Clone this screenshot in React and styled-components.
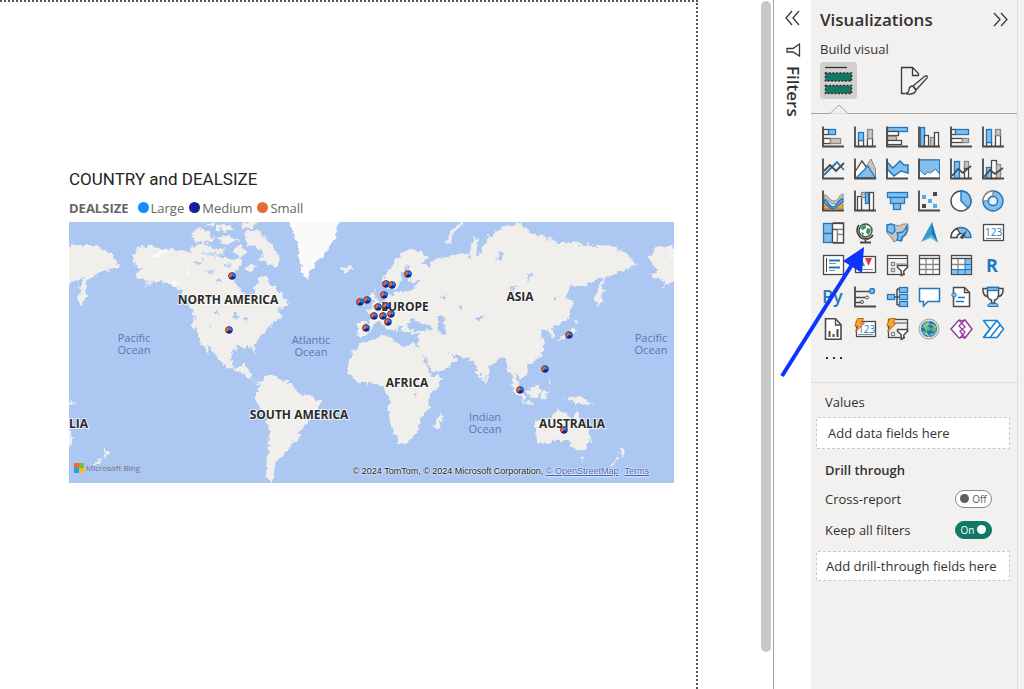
import { useState } from "react";
import styled, { createGlobalStyle } from "styled-components";

const GlobalStyle = createGlobalStyle`
  * {
    box-sizing: border-box;
  }
  body {
    margin: 0;
    background: #fff;
    color: #323130;
    font-family: "Open Sans", "Noto Sans", sans-serif;
    font-size: 13px;
  }
  button {
    padding: 0;
    border: 0;
    background: none;
    color: inherit;
    font: inherit;
    cursor: pointer;
  }
`;

const Layout = styled.div`
  display: flex;
  min-height: 100vh;
  overflow: hidden;
`;

const Canvas = styled.main`
  display: flex;
  flex: 1;
  min-width: 0;
  border-right: 1px solid #a3a1a0;
`;

const ReportPage = styled.section`
  flex: 1;
  min-width: 0;
  padding: 167px 22px 0 69px;
  border-top: 2px dotted #555;
  border-right: 2px dotted #555;
`;

const ScrollArea = styled.div`
  width: 75px;
  height: 652px;
  padding: 1px 2px 0 63px;
`;

const ScrollThumb = styled.div`
  height: 100%;
  border-radius: 5px;
  background: #c8c8c8;
`;

const VisualTitle = styled.h2`
  margin: 0;
  color: #252423;
  font-family: Roboto, sans-serif;
  font-size: 17px;
  font-weight: 400;
  line-height: 20px;
`;

const Legend = styled.div`
  display: flex;
  align-items: center;
  gap: 5px;
  height: 33px;
  color: #666;
  font-size: 13px;
  padding-top: 4px;
`;

const LegendTitle = styled.strong`
  font-weight: 700;
  margin-right: 4px;
`;

const LegendItem = styled.span`
  display: flex;
  align-items: center;
  gap: 2px;

  &::before {
    content: "";
    width: 11px;
    height: 11px;
    border-radius: 50%;
    background: ${(props) => props.$color};
  }
`;

const MapFrame = styled.div`
  position: relative;
  background: #abc7f2;

  > svg {
    display: block;
    width: 100%;
  }
`;

const MapLabel = styled.text`
  fill: #2b2b2b;
  stroke: #fff;
  stroke-opacity: 0.7;
  stroke-width: 2px;
  paint-order: stroke;
  font-size: 12px;
  font-weight: 700;
  text-anchor: middle;
`;

const OceanLabel = styled.text`
  fill: #5878b4;
  font-size: 11px;
  text-anchor: middle;
`;

const BingLogo = styled.div`
  position: absolute;
  left: 5px;
  bottom: 10px;
  display: flex;
  align-items: center;
  gap: 2px;
  color: #737373;
  font-size: 8px;
  line-height: 10px;
`;

const Credits = styled.div`
  position: absolute;
  right: 25px;
  bottom: 6px;
  color: #222;
  font-family: "Liberation Sans", Arial, sans-serif;
  font-size: 9px;
  line-height: 12px;
  text-shadow: 0 0 2px #fff, 0 0 2px #fff;
  white-space: nowrap;

  a {
    color: #4a63b5;
  }
  a + a {
    margin-left: 6px;
  }
`;

const FiltersPane = styled.aside`
  display: flex;
  flex-direction: column;
  align-items: center;
  width: 37px;
  padding-top: 10px;
  background: #fff;

  svg {
    display: block;
  }
`;

const FiltersLabel = styled.button`
  display: flex;
  align-items: center;
  gap: 8px;
  margin-top: 16px;
  font-size: 17px;
  font-weight: 600;
  line-height: 20px;
  writing-mode: vertical-rl;
`;

const VisPane = styled.aside`
  position: relative;
  width: 207px;
  background: #f2f1f0;
  border-right: 1px solid #dedcda;
`;

const PaneEdge = styled.div`
  width: 6px;
  background: #f2f1f0;
`;

const PaneHeader = styled.header`
  display: flex;
  align-items: center;
  justify-content: space-between;
  height: 38px;
  padding: 0 9px;

  h1 {
    margin: 0;
    font-size: 17px;
    font-weight: 600;
  }
  svg {
    display: block;
  }
`;

const BuildLabel = styled.div`
  padding-left: 9px;
  font-size: 13px;
  line-height: 22px;
`;

const Tabs = styled.div`
  position: relative;
  display: flex;
  gap: 38px;
  padding: 2px 9px 14px;
  border-bottom: 1px solid #a6a4a2;
`;

const Tab = styled.button`
  width: 37px;
  height: 37px;
  border-radius: 3px;
  background: ${(props) => (props.$active ? "#d2d0ce" : "transparent")};

  svg {
    display: block;
  }
`;

const Notch = styled.svg`
  position: absolute;
  left: 18px;
  bottom: -2px;
`;

const VisualGrid = styled.div`
  display: grid;
  grid-template-columns: repeat(6, 32px);
  grid-auto-rows: 32px;
  padding: 7px 6px 0;
`;

const VisualButton = styled.button`
  display: grid;
  place-items: center;

  svg {
    overflow: visible;
  }
  text {
    font-family: "Open Sans", sans-serif;
  }
`;

const MoreButton = styled.button`
  display: flex;
  align-items: center;
  height: 26px;
  margin: 0 0 11px 14px;
`;

const Fields = styled.div`
  padding: 8px 7px 0 5px;
  border-top: 1px solid #dedcda;
`;

const FieldHeading = styled.div`
  padding-left: 9px;
  margin-top: ${(props) => (props.$spaced ? "10px" : "0")};
  font-weight: ${(props) => (props.$strong ? 600 : 400)};
  line-height: 22px;
`;

const DropWell = styled.div`
  height: ${(props) => (props.$small ? "30px" : "32px")};
  margin-top: ${(props) => (props.$small ? "6px" : "4px")};
  padding-left: ${(props) => (props.$small ? "9px" : "11px")};
  border: 1px dashed #c8c6c4;
  border-radius: 2px;
  background: #fff;
  line-height: ${(props) => (props.$small ? "28px" : "30px")};
  white-space: nowrap;
`;

const SwitchRow = styled.label`
  display: flex;
  align-items: center;
  justify-content: space-between;
  height: 31px;
  padding: 0 18px 0 9px;
  cursor: pointer;

  &:first-of-type {
    margin-top: 2px;
  }
`;

const SwitchInput = styled.input`
  position: absolute;
  opacity: 0;
`;

const SwitchTrack = styled.span`
  display: flex;
  flex-direction: ${(props) => (props.$on ? "row" : "row-reverse")};
  align-items: center;
  justify-content: center;
  gap: 3px;
  width: 37px;
  height: 18px;
  border: 1px solid ${(props) => (props.$on ? "#117865" : "#8a8886")};
  border-radius: 9px;
  background: ${(props) => (props.$on ? "#117865" : "#fff")};
  color: ${(props) => (props.$on ? "#fff" : "#605e5c")};
  font-size: 10px;

  &::after {
    content: "";
    width: 9px;
    height: 9px;
    border-radius: 50%;
    background: ${(props) => (props.$on ? "#fff" : "#605e5c")};
  }
`;

const Pointer = styled.svg`
  position: absolute;
  left: -31px;
  top: 246px;
  pointer-events: none;
`;

// chart icon palette
const dark = "#4b4947";
const blue = "#83beec";
const edge = "#1f78bf";
const gray = "#c8c6c4";
const mid = "#8a8886";
const orange = "#f2a33a";

const Box = ({ x, y, w, h, f = "#fff", s = dark }) => (
  <rect x={x} y={y} width={w} height={h} fill={f} stroke={s} strokeWidth="1.300" />
);
const Axis = () => <path d="M1 .5V20.500H22" stroke={dark} fill="none" strokeWidth="1.800" />;
const Bolt = () => (
  <path d="M3.500.5h6L7 5h3.500L1.500 14 4 8H.8z" fill={orange} stroke="#c96a14" strokeWidth="1" />
);
const Funnel = () => (
  <path d="M11.500 11.500h10v1.800l-3.700 3.700v3l-2.500 1.500V17l-3.800-3.700z" fill="#fff" stroke={dark} strokeWidth="1.500" />
);

const visuals = [
  ["Stacked bar chart", <><Box x={1.5} y={3.5} w={5} h={5} /><Box x={6.5} y={3.5} w={7} h={5} f={blue} s={edge} /><Box x={1.5} y={12.5} w={7} h={5} /><Box x={8.5} y={12.5} w={10} h={5} f={gray} s={mid} /><Axis /></>],
  ["Stacked column chart", <><Box x={4.5} y={14.5} w={5} h={6} /><Box x={4.5} y={6.5} w={5} h={8} f={blue} s={edge} /><Box x={13.5} y={12.5} w={5} h={8} /><Box x={13.5} y={3.5} w={5} h={9} f={gray} s={mid} /><Axis /></>],
  ["Clustered bar chart", <><Box x={1.5} y={1.5} w={20} h={4} f={blue} s={edge} /><Box x={1.5} y={5.5} w={11} h={4} /><Box x={1.5} y={10.5} w={9} h={4} f={gray} s={mid} /><Box x={1.5} y={14.5} w={14} h={4} /><Axis /></>],
  ["Clustered column chart", <><Box x={2.5} y={1.5} w={4} h={19} f={blue} s={edge} /><Box x={6.5} y={9.5} w={4} h={11} /><Box x={12.5} y={11.5} w={4} h={9} f={gray} s={mid} /><Box x={16.5} y={6.5} w={4} h={14} /><Axis /></>],
  ["100% stacked bar chart", <><Box x={1.5} y={3.5} w={4} h={5} /><Box x={5.5} y={3.5} w={13} h={5} f={blue} s={edge} /><Box x={1.5} y={12.5} w={11} h={4} /><Box x={12.5} y={12.5} w={6} h={4} f={gray} s={mid} /><Axis /></>],
  ["100% stacked column chart", <><Box x={4.5} y={16.5} w={5} h={4} /><Box x={4.5} y={3.5} w={5} h={13} f={blue} s={edge} /><Box x={13.5} y={9.5} w={5} h={11} /><Box x={13.5} y={3.5} w={5} h={6} f={gray} s={mid} /><Axis /></>],
  ["Line chart", <><path d="M2 17l6-6 7-7 7 8" fill="none" stroke={edge} strokeWidth="1.800" /><path d="M2 13l6-6 6 6 8-8" fill="none" stroke={dark} strokeWidth="1.800" /><Axis /></>],
  ["Area chart", <><path d="M10 12L17 1l4.500 10v9z" fill={gray} stroke={mid} /><path d="M1 14L8 3l5 7-9 10H1z" fill="#fff" stroke={dark} strokeWidth="1.300" /><path d="M2 20L14 8l7.500 12z" fill={blue} stroke={edge} strokeWidth="1.300" /><Axis /></>],
  ["Stacked area chart", <><path d="M1 4l7 5 7-6 3 3 4 1v14H1z" fill="#fff" /><path d="M1 4l6 6 7-7 4 4h4v8l-7-2-7 5-7-7z" fill={blue} stroke={edge} strokeWidth="1.500" /><Axis /></>],
  ["100% stacked area chart", <><path d="M1 1.500h20.500V20H1z" fill="#fff" stroke={mid} /><path d="M1.500 2h20v14l-4-5-5 4-3-1-2.500 3L1.500 12z" fill={blue} stroke={edge} /><Axis /></>],
  ["Line and stacked column chart", <><Box x={4.5} y={3.5} w={5} h={17} f={blue} s={edge} /><Box x={14.5} y={3.5} w={4} h={7} f={gray} s={mid} /><Box x={14.5} y={10.5} w={4} h={10} /><path d="M2 18l6-7 5 4 8-7" fill="none" stroke={dark} strokeWidth="1.700" /><Axis /></>],
  ["Line and clustered column chart", <><Box x={4.5} y={9.5} w={5} h={11} f={blue} s={edge} /><Box x={9.5} y={2.5} w={5} h={18} /><Box x={14.5} y={6.5} w={4} h={14} f={gray} s={mid} /><path d="M2 19l6-7 5 4 8-6" fill="none" stroke={dark} strokeWidth="1.700" /><Axis /></>],
  ["Ribbon chart", <><path d="M2 5c5 0 5 6 10 6s5-7 9-7v4c-4 0-5 6-9 6S7 9 2 9z" fill={gray} stroke={mid} /><path d="M2 15h6v4H2zM14 14h7v5h-7z" fill={orange} stroke="#d07420" /><path d="M2 10c4 0 5 7 9 7s5-8 10-8v3c-4 0-5 7-10 7s-5-6-9-6z" fill={blue} stroke={edge} strokeWidth="1.300" /><Axis /></>],
  ["Waterfall chart", <><Box x={3.5} y={6.5} w={4} h={14} /><Box x={7.5} y={2.5} w={5} h={5} f={gray} s={mid} /><Box x={11.5} y={2.5} w={3} h={11} f={blue} s={edge} /><Box x={15.5} y={2.5} w={4} h={18} /><Axis /></>],
  ["Funnel", <><Box x={1.5} y={2.5} w={20} h={5} f={blue} s={edge} /><Box x={4.5} y={7.5} w={14} h={6} f={blue} s={edge} /><Box x={7.5} y={13.5} w={7} h={6} f={blue} s={edge} /></>],
  ["Scatter chart", <><path d="M4 5h4v4H4zM10 9h4v4h-4zM15 14h4v4h-4z" fill="#5ea7df" /><path d="M15 2h4v4h-4zM4 14h4v4H4z" fill={dark} /><Axis /></>],
  ["Pie chart", <><circle cx="11" cy="11" r="10" fill="#fff" stroke={dark} strokeWidth="1.400" /><path d="M11 1a10 10 0 0 1 7 17l-7-7z" fill={blue} stroke={edge} strokeWidth="1.400" /></>],
  ["Donut chart", <><circle cx="11" cy="11" r="10" fill={blue} stroke={edge} strokeWidth="1.400" /><path d="M11 1A10 10 0 0 0 1 11h5a5 5 0 0 1 5-5z" fill="#fff" stroke={mid} strokeWidth="1.400" /><circle cx="11" cy="11" r="4.500" fill="#f2f1f0" stroke={edge} strokeWidth="1.400" /></>],
  ["Treemap", <><Box x={1.5} y={1.5} w={9} h={10} f={blue} s={edge} /><Box x={1.5} y={11.5} w={9} h={9} f={blue} s={edge} /><Box x={10.5} y={1.5} w={11} h={6} /><Box x={10.5} y={7.5} w={5} h={13} /><Box x={15.5} y={7.5} w={6} h={5} s={mid} /><Box x={15.5} y={12.5} w={6} h={8} s={mid} /><path d="M11 1h10.500v20H11" fill="none" stroke={dark} strokeWidth="1.300" /></>],
  ["Map", <><circle cx="11.500" cy="8.500" r="6.500" fill="#fff" stroke={dark} strokeWidth="1.400" /><path d="M8 4l4-1v3L9 8 6.500 7zM13 6l4 1-1 4-2 2-2-3zM7 10l3 1-1 3z" fill="#2f9e55" /><path d="M5 3C1 8 4 17 12 17c3 0 5-1 7-4M11.500 17v3.500M6 20.500h11" fill="none" stroke={dark} strokeWidth="1.800" /></>],
  ["Filled map", <><path d="M1 3l4-1 4 1 4 1 4-2h5v6l-2 5-3 2-1 4-5-1-3 2-3-5-4-4z" fill={gray} stroke={mid} /><path d="M1 3l4-1 3 1 1 6-3 3-5-3z" fill={blue} stroke={edge} strokeWidth="1.300" /><path d="M11 11l6-1 4-6v5l-2 4-3 2-1 4-4-1 1-4z" fill={blue} stroke={edge} strokeWidth="1.300" /></>],
  ["Azure map", <><path d="M14 0L3 20l11-7z" fill="#3299cc" /><path d="M14 0v13l6 8z" fill="#1677bd" /><path d="M3 20l11-7 6 8-7-5z" fill="#52b9e5" /></>],
  ["Gauge", <><path d="M1 15.500a10 10 0 0 1 20 0h-6a4 4 0 0 0-8 0z" fill={blue} stroke={edge} strokeWidth="1.300" /><path d="M1 15.500a10 10 0 0 1 6-9l3 5a4 4 0 0 0-3 4z" fill="#fff" stroke={dark} strokeWidth="1.400" /><path d="M10 15.500l6-6-3 7z" fill={dark} stroke={dark} /></>],
  ["Card", <><Box x={1.5} y={2.5} w={20} h={16} /><text x="3" y="14" fontSize="10" fill={edge}>123</text><path d="M4 16.500h15" stroke={mid} /></>],
  ["Multi-row card", <><Box x={1.5} y={1.5} w={20} h={19} /><path d="M4.500 4v14" stroke={dark} /><path d="M7 6.500h11M7 13.500h11" stroke={edge} strokeWidth="2" /><path d="M7 9.500h7M7 16.500h6" stroke={mid} /></>],
  ["KPI", <><Box x={1.5} y={2.5} w={20} h={16} /><path d="M4 12l4-7 3 7z" fill="#34a360" /><path d="M11 4h7l-3.500 8z" fill="#d93c43" /><path d="M4 15.500h15" stroke={mid} /></>],
  ["Slicer", <><Box x={1.5} y={1.5} w={20} h={19} f="#f2f1f0" /><path d="M1 4.500h20.500" stroke={dark} /><Box x={5.5} y={8.5} w={3} h={3} s={mid} /><Box x={5.5} y={14.5} w={3} h={3} s={mid} /><path d="M10 10h10" stroke={mid} /><path d="M19 14h4v8h-4z" fill="#f2f1f0" /><Funnel /></>],
  ["Table", <><Box x={1.5} y={1.5} w={20} h={19} /><path d="M8 5v15M15 5v15M2 10.500h19M2 15.500h19" stroke={mid} strokeWidth="1.300" /><path d="M1 4.500h21" stroke={dark} strokeWidth="1.300" /><path d="M2 3h19" stroke={gray} /></>],
  ["Matrix", <><Box x={1.5} y={1.5} w={20} h={19} /><path d="M15 5h6v15H2v-5h13z" fill={blue} /><path d="M8 5v10M2 10.500h13" stroke={mid} strokeWidth="1.300" /><path d="M15 5v15M8 15v5M15 10.500h6M2 15.500h19" stroke={edge} /><path d="M1 4.500h21" stroke={dark} strokeWidth="1.300" /><path d="M2 3h19" stroke={gray} /></>],
  ["R script visual", <text x="4" y="18" fontSize="18" fontWeight="700" fill={edge}>R</text>],
  ["Python visual", <text x="0" y="17" fontSize="18" fontWeight="600" fill={edge}>Py</text>],
  ["Key influencers", <><path d="M1 5.500h15M1 11.500h10M1 16.500h6" stroke={dark} strokeWidth="1.300" /><circle cx="18" cy="5" r="2.500" fill={blue} stroke={edge} strokeWidth="1.300" /><circle cx="13" cy="11.500" r="1.500" fill="#fff" stroke={dark} /><circle cx="8" cy="16" r="1.500" fill="#fff" stroke={dark} /><Axis /></>],
  ["Decomposition tree", <><path d="M8 11h6M11 3v16M11 3h4M11 19h4" fill="none" stroke={dark} strokeWidth="1.500" /><Box x={1.5} y={8.5} w={7} h={5} f={blue} s={edge} /><Box x={13.5} y={1.5} w={8} h={5} f={blue} s={edge} /><Box x={13.5} y={8.5} w={8} h={5} f={blue} s={edge} /><Box x={13.5} y={15.5} w={8} h={5} f={blue} s={edge} /></>],
  ["Q&A", <path d="M1.500 2.500h20v13H10L5.500 20v-4.500h-4z" fill="#fff" stroke={edge} strokeWidth="1.500" />],
  ["Smart narrative", <><path d="M3.500 1.500h11l5 5v14h-16z" fill="#fff" stroke={dark} strokeWidth="1.500" /><path d="M14.500 1.500v5h5" fill="none" stroke={dark} strokeWidth="1.300" /><path d="M8 11.500h7M6 15.500h8" stroke={edge} strokeWidth="1.300" /><circle cx="4" cy="9" r="2.200" fill={blue} stroke={edge} /></>],
  ["Goals", <><path d="M5.500 1.500h11v7c0 3-2 5-4 5.500v3h-3v-3c-2-.5-4-2.500-4-5.500z" fill="#fff" stroke={dark} strokeWidth="1.500" /><path d="M5.500 2.500H1v3q1 5 5 5M16.500 2.500H21v3q-1 5-5 5" fill="none" stroke={dark} strokeWidth="1.500" /><Box x={5.5} y={1.5} w={11} h={3} f={blue} s={edge} /><path d="M6 20.500v-2l2-1h6l2 1v2z" fill={blue} stroke={edge} /></>],
  ["Paginated report", <><path d="M3.500.7h10l5.500 6v14.500H3.500z" fill="#fff" stroke={dark} strokeWidth="1.600" /><path d="M13.500 1v6h5" fill="none" stroke={dark} strokeWidth="1.300" /><path d="M7.500 13v6M11.500 16v3M15.500 11v8" stroke={dark} strokeWidth="2" /></>],
  ["Card (new)", <><Box x={2.5} y={3.5} w={19} h={15} /><text x="4" y="15" fontSize="10" fill={edge}>123</text><path d="M4 16.500h15" stroke={mid} /><Bolt /></>],
  ["Slicer (new)", <><Box x={2.5} y={1.5} w={19} h={18} f="#f2f1f0" /><path d="M8 5h13" stroke={dark} /><Box x={5.5} y={14.5} w={3} h={3} s={mid} /><path d="M19 14h4v8h-4z" fill="#f2f1f0" /><Funnel /><Bolt /></>],
  ["ArcGIS maps", <><circle cx="11" cy="11" r="10" fill="#ddd" stroke="#a3a3a3" /><circle cx="11" cy="11" r="8" fill="#1874bc" /><path d="M5 6l4-3 3 2-2 3 3 2-1 3-4-1-3-3zM14 5l4 3v5l-3 1-2-3 2-2zM5 12l4 3 1 3-4-2zM13 15l3 1-3 2z" fill="#66b267" /><path d="M4 10c5-5 10-5 14 0M4 14c5 4 10 4 14 0M11 3c-5 5-3 12 0 16" fill="none" stroke="#bbdaf0" strokeWidth=".7" /></>],
  ["Power Apps", <><path d="M1 11l8-9 3 1 3-1 7 9-7 9-3-1-3 1z" fill="#fff" stroke="#9a3c9e" strokeWidth="1.500" /><path d="M9 2l6 7-5 4 5 7M15 2L9 8l6 6-5 6" fill="none" stroke="#9a3c9e" strokeWidth="1.300" /></>],
  ["Power Automate", <><path d="M1.500 2.500H15l6.500 8.500-6.500 8.500H1.500L8 11z" fill="#fff" stroke="#1683d8" strokeWidth="1.600" strokeLinejoin="round" /><path d="M15 2.500L1.500 19.500M18 7L8 19.500" stroke="#1683d8" strokeWidth="1.500" /></>],
];

// one full turn of the globe is 517 units wide
const WORLD_WIDTH = 517;

const land = [
  // north and central america
  "M133 256 139 247 150 245 158 248 170 249 178 251 188 252 196 249 204 254 215 255 224 257 234 260 240 258 244 266 236 270 233 276 235 284 240 290 247 294 250 301 253 295 255 287 258 278 266 277 270 284 277 288 282 296 290 303 284 308 275 310 284 315 278 320 270 325 265 332 260 338 254 344 256 354 252 352 250 347 240 347 232 351 231 361 236 369 242 365 246 361 245 368 251 372 250 378 256 382 262 381 261 385 251 380 245 374 234 370 220 362 213 350 205 343 211 356 203 347 198 335 193 325 194 313 188 303 183 294 177 287 167 283 156 281 143 288 149 281 138 278 135 274 142 269 133 263Z",
  // arctic islands
  "M191 234 199 228 209 232 214 239 211 244 202 241 195 242Z",
  "M190 249 202 243 212 247 226 250 224 255 207 253 197 252Z",
  "M217 226 228 224 236 228 228 231 218 230Z M219 238 230 236 239 241 229 244 220 243Z M203 223 215 223 213 227Z",
  "M244 233 255 230 267 238 273 248 280 259 275 269 266 262 257 261 263 254 256 246 247 245Z M240 222 257 222 252 228 243 228Z",
  "M233 248 242 244 246 253 240 258Z M247 264 256 266 252 273 246 270Z",
  // iceland and britain
  "M340 268 350 265 352 268 345 273Z M371 291 375 290 374 296 379 303 372 306 373 300 370 296Z M364 299 368 298 366 304 361 304Z",
  // south america
  "M260 380 268 376 280 379 293 384 300 393 313 398 321 402 318 409 312 418 303 427 299 437 290 445 287 451 279 457 275 467 272 482 266 478 267 457 270 438 268 421 262 411 255 400 257 391 261 385Z",
  // africa
  "M360 342 370 342 377 337 391 335 394 342 407 347 414 343 420 347 426 365 432 376 443 376 438 387 428 398 429 407 421 418 417 432 407 444 398 443 392 427 388 411 390 401 384 388 371 383 358 383 348 373 348 362Z",
  // europe and asia
  "M358 323 370 323 371 315 366 311 376 307 385 300 388 294 395 295 393 288 385 287 382 280 389 270 397 257 410 248 420 252 429 259 421 262 430 267 432 261 442 257 455 255 464 252 470 257 474 236 478 240 476 257 483 251 487 237 498 231 512 225 520 224 529 231 541 236 552 240 558 244 570 241 584 245 597 245 611 246 627 253 637 265 628 269 616 273 608 277 603 281 604 294 599 306 594 300 598 288 602 277 583 286 571 286 565 297 572 302 571 315 560 325 552 327 556 337 552 338 547 330 539 331 543 338 545 347 542 355 533 362 526 364 527 374 521 379 516 372 518 385 522 392 515 387 509 370 505 357 498 358 490 367 488 375 483 382 478 372 474 362 466 358 455 356 447 350 457 359 450 368 434 373 424 356 418 345 419 334 407 333 401 330 405 326 399 326 397 333 390 325 386 319 393 329 388 330 381 321 372 325 369 334 364 338 358 336Z",
  // novaya zemlya
  "M446 245 449 235 454 227 462 222 464 225 455 231 450 244Z",
  // madagascar, ceylon
  "M435 421 439 415 442 413 440 426 435 429Z M485 379 488 382 486 384Z",
  // indonesia and new guinea
  "M509 381 516 386 525 396 524 402 515 392Z M522 401 534 403 533 405 523 403Z M528 391 539 383 540 390 537 398 530 396Z M542 391 549 389 545 393 547 399 542 398Z M548 378 552 381 551 386Z M565 396 572 396 583 398 593 405 582 404 571 402Z",
  // australia and new zealand
  "M535 423 543 418 550 417 559 410 567 411 570 419 574 420 576 409 580 419 588 430 590 439 584 452 574 449 569 442 559 440 546 444 538 443 535 433Z M579 456 584 457 581 461Z M620 447 626 453 621 457Z M619 457 617 461 610 467 610 464Z",
  // japan
  "M574 320 580 321 576 324Z M575 327 575 334 562 340 556 342 568 332Z",
].join(" ");

const lakes =
  "M408 264 402 274 402 281 392 292 402 291 414 290 413 287 421 282 410 282 407 277Z M408 330 407 323 413 318 419 322 430 325 433 330 420 331Z M438 317 446 317 443 323 447 335 440 334 438 325Z M497 253 504 251 503 259 496 260 500 256Z M526 278 531 271 532 275 527 281Z M510 288 520 286 512 291Z M553 298 559 299 554 301Z M475 318 486 315 479 321Z M208 327 211 326 210 328Z M232 313 238 315 236 321Z M244 317 249 319 245 323Z M413 393 417 393 417 397Z M440 298 449 294 444 300Z M458 307 463 304 462 310Z M193 262 204 260 199 264Z M207 272 215 269 212 273 206 275Z M216 282 219 277 221 283Z M214 313 218 308 219 315Z M222 263 232 264 224 268Z M260 296 266 294 265 298Z";

const points = [
  [232, 276], [229, 330], [408, 274], [386, 284], [392, 285], [384, 295], [360, 302],
  [367, 300], [378, 307], [386, 306], [374, 316], [383, 316], [391, 314], [388, 322],
  [366, 328], [569, 335], [545, 369], [520, 390], [564, 430],
];

const continents = [
  ["NORTH AMERICA", 228, 304],
  ["SOUTH AMERICA", 299, 419],
  ["EUROPE", 405, 311],
  ["AFRICA", 407, 387],
  ["ASIA", 520, 301],
  ["AUSTRALIA", 572, 428],
  ["AUSTRALIA", 55, 428],
];

const oceans = [
  ["Pacific", 134, 342],
  ["Atlantic", 311, 344],
  ["Indian", 485, 421],
  ["Pacific", 651, 342],
];

function WorldMap() {
  return (
    <svg viewBox="69 222 605 261" role="img" aria-label="Map of COUNTRY by DEALSIZE">
      <defs>
        <filter id="coast" x="-5%" y="-5%" width="110%" height="110%">
          <feTurbulence type="fractalNoise" baseFrequency="0.2" numOctaves="3" seed="4" />
          <feDisplacementMap in="SourceGraphic" scale="8" xChannelSelector="R" yChannelSelector="G" />
        </filter>
        <g id="world">
          <path d={land} fill="#f0efeb" />
          <path d={lakes} fill="#abc7f2" />
          <path
            d="M288 220 293 230 295 240 298 253 302 273 307 280 311 270 318 260 328 250 335 240 338 227 340 220Z M152 254 165 249 169 252 157 258Z M187 267 190 271 188 277Z M166 277 179 285 174 286Z"
            fill="#fafaf9"
          />
        </g>
      </defs>
      <g filter="url(#coast)">
        <use href="#world" />
        <use href="#world" x={-WORLD_WIDTH} />
        <use href="#world" x={WORLD_WIDTH} />
      </g>
      {oceans.map(([name, x, y]) => (
        <OceanLabel key={x} x={x} y={y}>
          {name}
          <tspan x={x} dy="12">Ocean</tspan>
        </OceanLabel>
      ))}
      {continents.map(([name, x, y]) => (
        <MapLabel key={name + x} x={x} y={y}>{name}</MapLabel>
      ))}
      {points.map(([x, y]) => (
        <g key={`${x}-${y}`} transform={`translate(${x} ${y})`}>
          <circle r="3.500" fill="#12239e" />
          <path d="M0 0L1-3.400A3.500 3.500 0 0 0-2.500 2.500z" fill="#e66c37" />
          <path d="M0 0L1-3.400A3.500 3.500 0 0 1 3.300 1z" fill="#118dff" />
          <circle r="3.300" fill="none" stroke="#3a2440" strokeWidth=".6" />
        </g>
      ))}
    </svg>
  );
}

function Switch({ label, defaultOn }) {
  const [on, setOn] = useState(defaultOn);

  return (
    <SwitchRow>
      {label}
      <SwitchInput type="checkbox" checked={on} onChange={() => setOn((prev) => !prev)} />
      <SwitchTrack $on={on}>{on ? "On" : "Off"}</SwitchTrack>
    </SwitchRow>
  );
}

function MapVisual() {
  return (
    <ReportPage>
      <VisualTitle>COUNTRY and DEALSIZE</VisualTitle>
      <Legend>
        <LegendTitle>DEALSIZE</LegendTitle>
        <LegendItem $color="#118dff">Large</LegendItem>
        <LegendItem $color="#12239e">Medium</LegendItem>
        <LegendItem $color="#e66c37">Small</LegendItem>
      </Legend>
      <MapFrame>
        <WorldMap />
        <BingLogo>
          <svg width="10" height="10">
            <path d="M0 0h5v5H0z" fill="#f0653a" />
            <path d="M5 0h5v5H5z" fill="#80bb3d" />
            <path d="M0 5h5v5H0z" fill="#15a8ee" />
            <path d="M5 5h5v5H5z" fill="#fdbb14" />
          </svg>
          Microsoft Bing
        </BingLogo>
        <Credits>
          © 2024 TomTom, © 2024 Microsoft Corporation, <a href="#osm">© OpenStreetMap</a>
          <a href="#terms">Terms</a>
        </Credits>
      </MapFrame>
    </ReportPage>
  );
}

function VisualizationsPane() {
  const [tab, setTab] = useState("build");

  return (
    <VisPane>
      <PaneHeader>
        <h1>Visualizations</h1>
        <button aria-label="Collapse">
          <svg width="15" height="15" fill="none" stroke="#3b3a39" strokeWidth="1.300">
            <path d="M1 1l6 6.500L1 14M8 1l6 6.500L8 14" />
          </svg>
        </button>
      </PaneHeader>
      <BuildLabel>Build visual</BuildLabel>
      <Tabs>
        <Tab $active={tab === "build"} onClick={() => setTab("build")} aria-label="Build visual">
          <svg width="37" height="37">
            <path d="M5 5.500h22" stroke="#323130" strokeWidth="1.300" />
            <g fill="#117865" stroke="#323130" strokeWidth="1.600" strokeDasharray="2 1.500">
              <path d="M5.500 11h26v8h-26zM5.500 23.500h26v8h-26z" />
            </g>
          </svg>
        </Tab>
        <Tab $active={tab === "format"} onClick={() => setTab("format")} aria-label="Format visual">
          <svg width="37" height="37" fill="none" stroke="#3b3a39" strokeWidth="1.300">
            <path d="M10 31.500H6.500v-26h11l6 6V14M17.500 5.500v8h6" />
            <path d="M18 24L30 14q3-1 2 2L21 28M18 24q-4 0-4 4-.5 3-3.500 3.500 9 2 10.500-3.500z" />
            <path d="M18 24l3 4" />
          </svg>
        </Tab>
        <Notch width="20" height="11">
          <path d="M1 9.500h18v1.500H1z" fill="#f2f1f0" />
          <path d="M1 9.500l9-8.500 9 8.500" fill="#f2f1f0" stroke="#a6a4a2" />
        </Notch>
      </Tabs>
      <VisualGrid>
        {visuals.map(([name, icon]) => (
          <VisualButton key={name} aria-label={name}>
            <svg width="22" height="22" fill="none">{icon}</svg>
          </VisualButton>
        ))}
      </VisualGrid>
      <MoreButton aria-label="Get more visuals">
        <svg width="20" height="4" fill="#323130">
          <path d="M1 1h2v2H1zM8 1h2v2H8zM15 1h2v2h-2z" />
        </svg>
      </MoreButton>
      <Fields>
        <FieldHeading>Values</FieldHeading>
        <DropWell>Add data fields here</DropWell>
        <FieldHeading $spaced $strong>Drill through</FieldHeading>
        <Switch label="Cross-report" defaultOn={false} />
        <Switch label="Keep all filters" defaultOn />
        <DropWell $small>Add drill-through fields here</DropWell>
      </Fields>
      <Pointer width="90" height="134">
        <path d="M2 130L73 17" stroke="#0d33ff" strokeWidth="4" />
        <path d="M84 1L63 15l19 12z" fill="#0d33ff" />
      </Pointer>
    </VisPane>
  );
}

export default function App() {
  return (
    <>
      <GlobalStyle />
      <Layout>
        <Canvas>
          <MapVisual />
          <ScrollArea>
            <ScrollThumb />
          </ScrollArea>
        </Canvas>
        <FiltersPane>
          <button aria-label="Expand filters">
            <svg width="15" height="16" fill="none" stroke="#3b3a39" strokeWidth="1.300">
              <path d="M7 1L1 8l6 7M14 1L8 8l6 7" />
            </svg>
          </button>
          <FiltersLabel>
            <svg width="16" height="16" fill="none" stroke="#3b3a39" strokeWidth="1.300">
              <path d="M14.500 2v12L8 10H2V6.500h6z" />
            </svg>
            Filters
          </FiltersLabel>
        </FiltersPane>
        <VisualizationsPane />
        <PaneEdge />
      </Layout>
    </>
  );
}
